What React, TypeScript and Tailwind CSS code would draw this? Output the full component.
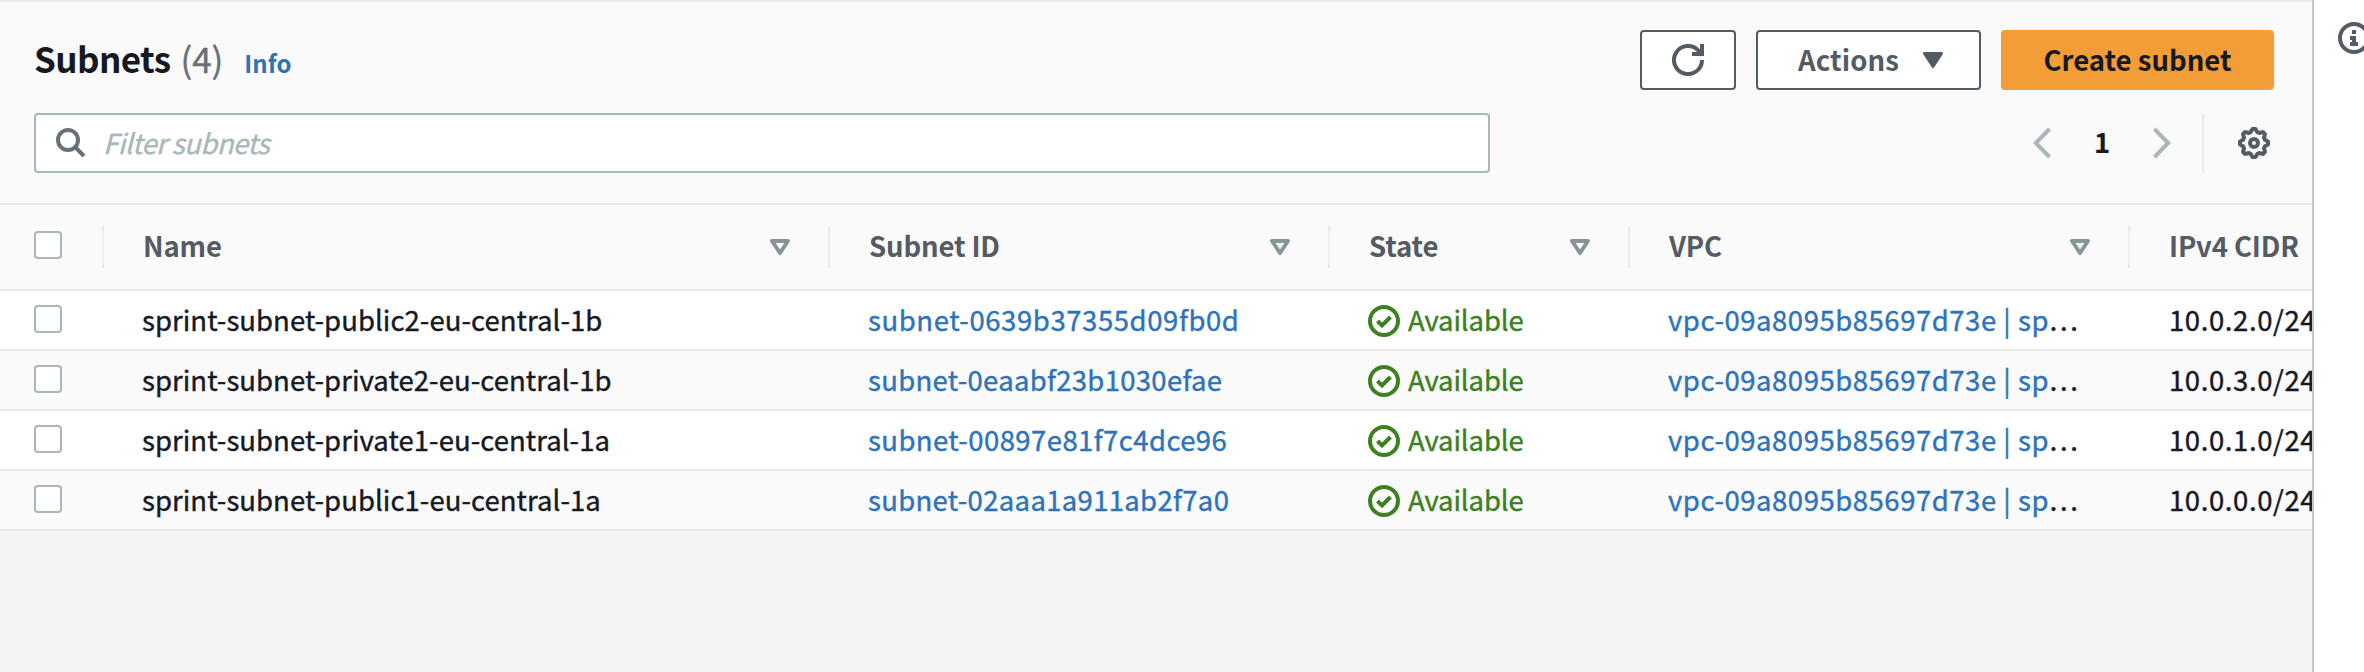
import React from "react";

const rows = [
  { name: "sprint-subnet-public2-eu-central-1b", id: "subnet-0639b37355d09fb0d", cidr: "10.0.2.0/24", idTracking: "tracking-[0.58px]" },
  { name: "sprint-subnet-private2-eu-central-1b", id: "subnet-0eaabf23b1030efae", cidr: "10.0.3.0/24", idTracking: "tracking-[0.3px]" },
  { name: "sprint-subnet-private1-eu-central-1a", id: "subnet-00897e81f7c4dce96", cidr: "10.0.1.0/24", idTracking: "tracking-[0.42px]" },
  { name: "sprint-subnet-public1-eu-central-1a", id: "subnet-02aaa1a911ab2f7a0", cidr: "10.0.0.0/24", idTracking: "tracking-[0.32px]" },
];

const grid = "grid grid-cols-[104px_726px_500px_300px_500px_184px]";

function Checkbox() {
  return <span className="block size-7 rounded-[4px] border-2 border-[#aab7b8] bg-white" />;
}

function HeaderCell({ label, sortable = true }: { label: string; sortable?: boolean }) {
  return (
    <div className="flex h-full items-center justify-between pr-10 pl-10 pb-1 whitespace-nowrap">
      <span className="-ml-px">{label}</span>
      {sortable && (
        <svg width="20" height="16" viewBox="0 0 20 16" className="mt-1 shrink-0">
          <path d="M2 2H18L10 14Z" fill="none" stroke="#879596" strokeWidth="4" strokeLinejoin="round" />
        </svg>
      )}
    </div>
  );
}

function Divider() {
  return <span className="h-[42px] w-0.5 shrink-0 bg-[#eaeded]" />;
}

function Header() {
  const labels = ["Name", "Subnet ID", "State", "VPC", "IPv4 CIDR"];
  return (
    <div className={`${grid} h-[88px] border-y-2 border-[#eaeaea] font-bold text-[#545b64] tracking-[-0.15px]`}>
      <div className="flex items-center justify-between pl-[34px]">
        <span className="pb-1">
          <Checkbox />
        </span>
        <Divider />
      </div>
      {labels.map((label, i) => (
        <div key={label} className="flex items-center">
          <div className="h-full min-w-0 flex-1">
            <HeaderCell label={label} sortable={i < 4} />
          </div>
          {i < 4 && (
            <span className="-ml-0.5 flex">
              <Divider />
            </span>
          )}
        </div>
      ))}
    </div>
  );
}

function StatusIcon() {
  return (
    <svg width="32" height="32" viewBox="0 0 32 32" fill="none" stroke="#3c8021" strokeWidth="4" className="shrink-0">
      <circle cx="16" cy="16" r="14" />
      <path d="M9.5 16L14 20.5L22.5 12" />
    </svg>
  );
}

function Gear() {
  const points = Array.from({ length: 64 }, (_, i) => {
    const a = (i / 64) * Math.PI * 2;
    const wave = Math.max(-1, Math.min(1, Math.cos(8 * a) * 1.7));
    const r = 12.7 + 1.4 * wave;
    return `${(16 + r * Math.cos(a)).toFixed(2)},${(16 + r * Math.sin(a)).toFixed(2)}`;
  }).join(" ");
  return (
    <svg width="32" height="32" viewBox="0 0 32 32" fill="none" stroke="#545b64" strokeWidth="4" strokeLinejoin="round">
      <polygon points={points} />
      <circle cx="16" cy="16" r="4" strokeWidth="4" />
    </svg>
  );
}

export default function App() {
  return (
    <div className="flex h-[672px] w-[2364px] overflow-hidden bg-white font-['Noto_Sans_CJK_JP','Noto_Sans',sans-serif] text-[27.5px] leading-[40px] text-[#16191f]">
      <main className="flex w-[2314px] shrink-0 flex-col overflow-hidden border-r-2 border-[#c3cacb] bg-[#f2f4f3]">
        <section className="w-[2314px] border-t-2 border-[#ebebeb] bg-[#fafafa]">
          <div className="flex h-[88px] items-center justify-between pt-7 pr-10 pl-[34px]">
            <div className="flex items-baseline">
              <h1 className="text-[35px] font-bold tracking-[-0.6px]">Subnets</h1>
              <span className="ml-[10px] text-[35px] text-[#687078] tracking-[-0.1px] [-webkit-text-stroke:0.4px_#687078]">(4)</span>
              <a className="ml-[21px] text-[24px] font-bold text-[#2e73b8] tracking-[0.1px]">Info</a>
            </div>
            <div className="flex gap-5 font-bold">
              <button className="flex h-[60px] w-24 items-center justify-center rounded-[4px] border-2 border-[#545b64] bg-white">
                <svg width="32" height="32" viewBox="0 0 32 32" fill="none" stroke="#545b64" strokeWidth="4">
                  <path d="M30 16A14 14 0 1 1 26.5 6.8L28 9" />
                  <path d="M20 10H30V0" />
                </svg>
              </button>
              <button className="flex h-[60px] w-[225px] items-center justify-between rounded-[4px] border-2 border-[#545b64] bg-white pr-9 pl-10 text-[#545b64] tracking-[0.1px]">
                <span className="pb-[3px]">Actions</span>
                <svg width="20" height="16" viewBox="0 0 20 16">
                  <path d="M1.5 1.5H18.5L10 14.5Z" fill="#545b64" stroke="#545b64" strokeWidth="3" strokeLinejoin="round" />
                </svg>
              </button>
              <button className="flex h-[60px] w-[273px] items-center justify-center rounded-[4px] bg-[#f39d38] pb-[3px]">
                Create subnet
              </button>
            </div>
          </div>
          <div className="mt-[23px] flex h-[60px] items-center justify-between pr-[44px] pl-[34px]">
            <div className="flex h-[60px] w-[1456px] items-center rounded-[4px] border-2 border-[#aab7b8] bg-white pl-5">
              <svg width="30" height="30" viewBox="0 0 30 30" fill="none" stroke="#687078" strokeWidth="4">
                <circle cx="12" cy="12" r="10" />
                <path d="M19 19L28 28" />
              </svg>
              <span className="ml-[17px] pb-0.5 text-[#aab7b8] italic tracking-[-0.55px] [-webkit-text-stroke:0.4px_#aab7b8]">
                Filter subnets
              </span>
            </div>
            <div className="flex h-[60px] items-center">
              <svg width="18" height="32" viewBox="0 0 18 32" fill="none" stroke="#aab7b8" strokeWidth="4">
                <path d="M16.5 2L2.8 16L16.5 30" />
              </svg>
              <span className="w-[102px] pb-1 text-center font-bold">1</span>
              <svg width="18" height="32" viewBox="0 0 18 32" fill="none" stroke="#aab7b8" strokeWidth="4">
                <path d="M1.5 2L15.2 16L1.5 30" />
              </svg>
              <span className="mr-[34px] ml-[31px] h-[60px] w-0.5 bg-[#eaeded]" />
              <Gear />
            </div>
          </div>
          <div className="mt-[30px]">
            <Header />
            {rows.map((row) => (
              <div
                key={row.id}
                className={`${grid} h-[60px] items-center border-b-2 border-[#eaeaea] whitespace-nowrap odd:bg-[#fafafa] even:bg-white`}
              >
                <div className="pb-0.5 pl-[34px]">
                  <Checkbox />
                </div>
                <div className="pb-0.5 pl-[38px] tracking-[0.05px] [-webkit-text-stroke:0.4px_#16191f]">{row.name}</div>
                <div className={`pb-0.5 pl-[38px] text-[#2e73b8] [-webkit-text-stroke:0.4px_#2e73b8] ${row.idTracking}`}>{row.id}</div>
                <div className="flex items-center gap-2 pl-[38px] text-[#3c8021] [-webkit-text-stroke:0.4px_#3c8021]">
                  <span className="pt-0.5">
                    <StatusIcon />
                  </span>
                  <span className="pb-0.5 tracking-[-0.1px]">Available</span>
                </div>
                <div className="pb-0.5 pl-[38px] tracking-[0.53px] [-webkit-text-stroke:0.4px]">
                  <span className="text-[#2e73b8]">vpc-09a8095b85697d73e | sp</span>…
                </div>
                <div className="pb-0.5 pl-[39px] tracking-[0.6px] [-webkit-text-stroke:0.4px_#16191f]">{row.cidr}</div>
              </div>
            ))}
          </div>
        </section>
      </main>
      <aside className="flex flex-1 overflow-hidden bg-white pt-[22px] pl-6">
        <svg width="32" height="32" viewBox="0 0 32 32" className="shrink-0">
          <circle cx="16" cy="16" r="14" fill="none" stroke="#545b64" strokeWidth="4" />
          <path d="M14 8h4v4h-4zM12 14h6v6h2v4h-8v-4h2v-2h-2z" fill="#545b64" />
        </svg>
      </aside>
    </div>
  );
}
